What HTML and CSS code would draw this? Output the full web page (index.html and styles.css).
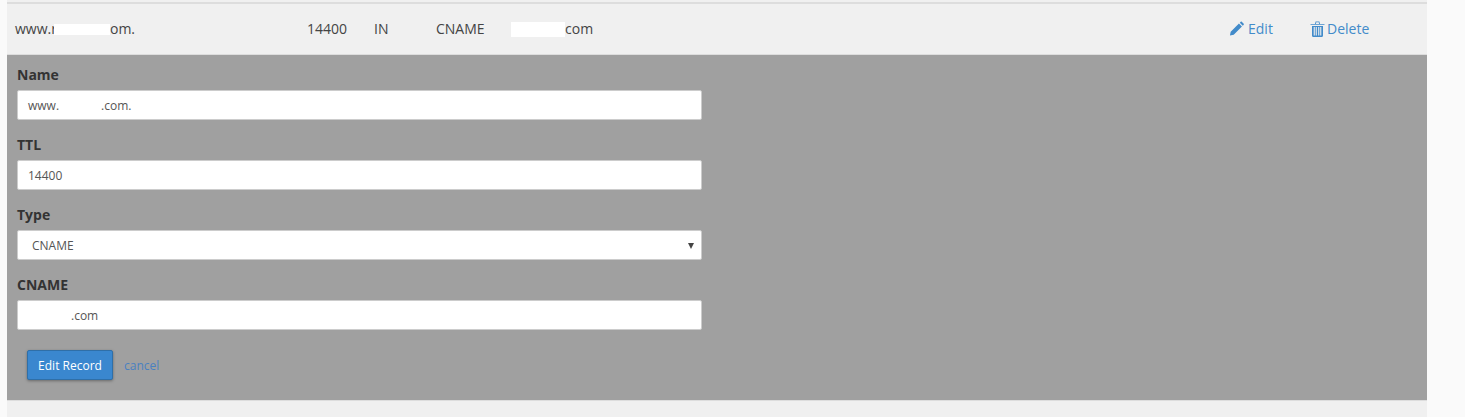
FILE: index.html
```html
<!DOCTYPE html>
<html lang="en-US">
  <head>
    <meta charset="utf-8"/>
    <title>Zone records</title>
    <link rel="stylesheet" href="styles.css">
  </head>

  <body>
    <main class="zone">
      <div class="record">
        <span class="cell-name">www.r<span class="mask mask-name"></span>om.</span>
        <span class="cell-ttl">14400</span>
        <span class="cell-class">IN</span>
        <span class="cell-type">CNAME</span>
        <span class="cell-value"><span class="mask mask-value"></span>com</span>
        <a class="action action-edit" href="#">
          <svg class="icon" viewBox="0 0 16 16"><path d="M1 15l.8-4L10.6 2.2l3.2 3.2L5 14.200z M11.500 1.300l1-1c.4-.3.8-.3 1.100 0l2.100 2.100c.3.300.3.700 0 1.100l-1 1z"/></svg>
          Edit
        </a>
        <a class="action action-delete" href="#">
          <svg class="icon" viewBox="0 0 14 16"><path d="M0 3h14v.8H0z M4.500 3l.6-2.500h3.800L9.500 3h-.9l-.4-1.700H5.800L5.400 3z M1.500 5h11v9.500c0 .8-.5 1.500-1.300 1.500H2.800c-.8 0-1.300-.7-1.300-1.500z M3.200 6v8.500h1.100V6z M5.200 6v8.500h1.100V6z M7.700 6v8.500h1.100V6z M9.700 6v8.500h1.100V6z" fill-rule="evenodd"/></svg>
          Delete
        </a>
      </div>

      <form class="edit-form">
        <div class="field">
          <label for="name">Name</label>
          <div class="input" id="name">www.<span class="mask mask-input"></span>.com.</div>
        </div>
        <div class="field">
          <label for="ttl">TTL</label>
          <div class="input" id="ttl">14400</div>
        </div>
        <div class="field">
          <label for="type">Type</label>
          <div class="input input-select" id="type">CNAME<span class="arrow"></span></div>
        </div>
        <div class="field">
          <label for="cname">CNAME</label>
          <div class="input" id="cname"><span class="mask mask-cname"></span>.com</div>
        </div>
        <div class="buttons">
          <button type="button" class="btn">Edit Record</button>
          <a class="cancel" href="#">cancel</a>
        </div>
      </form>
    </main>
  </body>

</html>
```

FILE: styles.css
```css
* {
  box-sizing: border-box;
}

body {
  background-color: #fafafa;
  color: #444;
  font: 14px / 20px "Open Sans", "Liberation Sans", sans-serif;
  margin: 0;
  height: 417px;
  overflow: hidden;
}

a {
  color: #428bca;
  text-decoration: none;
}

.zone {
  width: 1420px;
  height: 417px;
  margin-left: 7px;
  padding-top: 2px;
  background-color: #f0f0f0;
}

.record {
  display: flex;
  align-items: center;
  height: 53px;
  padding-left: 8px;
  padding-bottom: 1px;
  border-top: 2px solid #ddd;
  border-bottom: 1px solid #ddd;
}

.cell-name {
  width: 292px;
}

.cell-ttl {
  width: 67px;
}

.cell-class {
  width: 62px;
}

.cell-type {
  width: 75px;
}

.cell-value {
  width: 718px;
}

.mask {
  display: inline-block;
  background-color: #fff;
  vertical-align: middle;
}

.mask-name {
  width: 56px;
  height: 11px;
  margin-left: -3px;
}

.mask-value {
  width: 54px;
  height: 15px;
}

.mask-input {
  width: 42px;
  height: 12px;
}

.mask-cname {
  width: 43px;
  height: 14px;
}

.action {
  display: flex;
  align-items: center;
  gap: 3px;
}

.action-edit {
  width: 81px;
  gap: 4px;
}

.action-delete {
  gap: 2px;
}

.icon {
  width: 15px;
  height: 16px;
  fill: #428bca;
}

.edit-form {
  height: 346px;
  padding: 10px 10px 0;
  background-color: #a0a0a0;
  border-bottom: 1px solid #ddd;
}

.field {
  width: 685px;
  height: 70px;
}

label {
  display: block;
  color: #333;
  font-weight: 700;
  height: 25px;
}

.input {
  display: flex;
  align-items: center;
  height: 30px;
  padding: 1px 10px 0;
  background-color: #fff;
  border: 1px solid #ccc;
  border-radius: 2px;
  color: #555;
  font-size: 12px;
}

.input-select {
  justify-content: space-between;
  padding: 1px 7px 0 14px;
}

.arrow {
  width: 0;
  height: 0;
  border-left: 3px solid transparent;
  border-right: 3px solid transparent;
  border-top: 6px solid #444;
}

.buttons {
  display: flex;
  align-items: center;
  gap: 11px;
  margin-top: 5px;
  padding-left: 10px;
}

.btn {
  width: 86px;
  height: 30px;
  padding: 0;
  background-color: #3a87cf;
  border: 1px solid #2f6fa8;
  border-radius: 2px;
  box-shadow: 0 1px 3px rgba(0, 0, 0, .35);
  color: #fff;
  font: 12px "Open Sans", sans-serif;
}

.cancel {
  padding-top: 1px;
  color: #4a80c0;
  font-size: 12px;
}
```
